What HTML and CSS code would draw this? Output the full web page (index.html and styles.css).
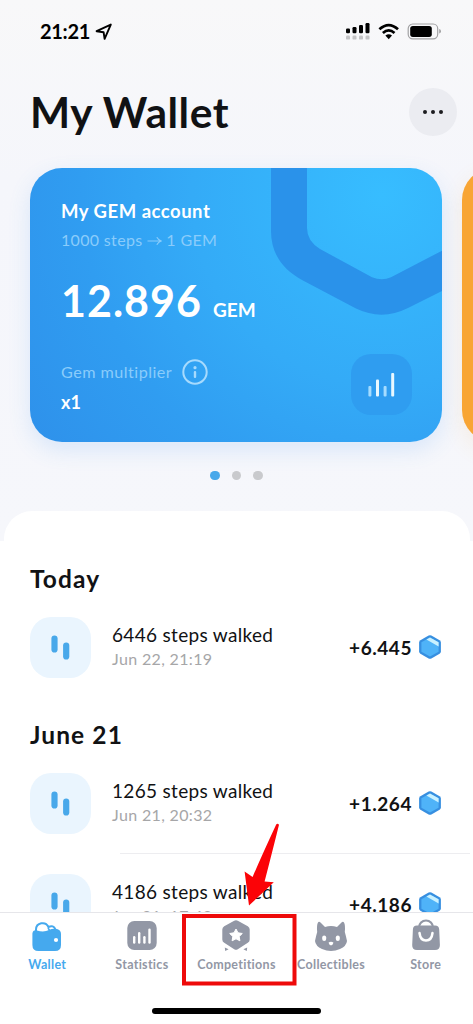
FILE: index.html
```html
<!DOCTYPE html>
<html lang="en">
<head>
<meta charset="utf-8">
<title>My Wallet</title>
<link rel="stylesheet" href="styles.css">
</head>
<body>
<svg width="0" height="0" class="defs">
  <symbol id="gem" viewBox="0 0 24 26">
    <path d="M10.6 1.6 Q12 .9 13.4 1.6 L21.6 6.2 Q22.9 7 22.9 8.5 V17.5 Q22.9 19 21.6 19.8 L13.4 24.4 Q12 25.1 10.6 24.4 L2.4 19.8 Q1.1 19 1.1 17.5 V8.5 Q1.1 7 2.4 6.2 Z" fill="#378fe0"/>
    <path d="M12 3.4 L20.6 8.3 V17.7 L12 22.6 L3.4 17.7 V8.3 Z" fill="#4fb3f8"/>
    <path d="M12 3.4 L20.6 8.3 V12.4 L8.4 5.5 Z" fill="#c9f1ff"/>
  </symbol>
  <symbol id="steps" viewBox="0 0 61 61">
    <rect x="21.4" y="18.5" width="6.2" height="17" rx="3.1" fill="#48a8ea"/>
    <rect x="33.1" y="25.5" width="6.2" height="17" rx="3.1" fill="#48a8ea"/>
  </symbol>
</svg>
<div class="screen">
  <div class="status">
    <div class="clock">21:21</div>
    <svg class="nav-arrow" width="18" height="18" viewBox="0 0 18 18"><path d="M1.6 8.2 L15.8 1.6 L9.6 15.8 L8.6 9.2 Z" fill="none" stroke="#000" stroke-width="1.9" stroke-linejoin="round"/></svg>
    <svg class="indicators" width="100" height="20" viewBox="0 0 100 20">
      <g fill="#000"><rect x="1" y="6.4" width="4" height="4.8" rx="1.2"/><rect x="7.5" y="5" width="4" height="6.2" rx="1.2"/><rect x="14" y="3" width="4" height="8.2" rx="1.2"/><rect x="20.5" y="1" width="4" height="10.2" rx="1.2"/></g>
      <g fill="#c4c4c6"><rect x="1" y="13.6" width="4" height="4" rx="1.2"/><rect x="7.5" y="13.6" width="4" height="4" rx="1.2"/><rect x="14" y="13.6" width="4" height="4" rx="1.2"/><rect x="20.5" y="13.6" width="4" height="4" rx="1.2"/></g>
      <g fill="none" stroke="#000" stroke-width="2.7"><path d="M34.4 7.3 Q43.7 -1.2 53 7.3"/><path d="M37.9 11 Q43.7 5.8 49.5 11"/></g>
      <path d="M40.4 13.6 Q43.7 11 47 13.6 L43.7 17.2 Z" fill="#000"/>
      <rect x="63.2" y="2" width="29.5" height="14.8" rx="4.6" fill="none" stroke="#a2a2a4" stroke-width="1.2"/>
      <rect x="65.2" y="3.9" width="21.6" height="11" rx="2.6" fill="#000"/>
      <path d="M94.2 7 Q96 7.6 96 9.3 Q96 11 94.2 11.6 Z" fill="#a2a2a4"/>
    </svg>
  </div>
  <header class="header">
    <h1>My Wallet</h1>
    <div class="more"><i></i><i></i><i></i></div>
  </header>
  <div class="carousel">
    <section class="card">
      <svg class="card-art" width="412" height="274" viewBox="30 168 412 274">
        <path d="M271 168 V231 C271 255 284 270 302 280 L356 308.500 Q382 321 408 308 L442 291 V250.700 L391 277.200 Q382 281.500 372 277.200 L320 249 Q307 241 307 228 V168 Z" fill="#2a92ea"/>
      </svg>
      <div class="card-body">
        <div class="card-title">My GEM account</div>
        <div class="card-rate">1000 steps <svg width="15" height="10" viewBox="0 0 15 10"><path d="M.5 5 H14 M9.800 1.200 Q11.500 4 14.200 5 Q11.500 6 9.800 8.800" fill="none" stroke="currentColor" stroke-width="1.2"/></svg> 1 GEM</div>
        <div class="balance"><span class="amount-big">12.896</span><span class="unit">GEM</span></div>
        <div class="multi"><span>Gem multiplier</span>
          <svg width="26" height="26" viewBox="0 0 26 26"><circle cx="13" cy="13" r="11.700" fill="none" stroke="currentColor" stroke-width="2"/><circle cx="13" cy="8.700" r="1.600" fill="currentColor"/><rect x="11.800" y="12" width="2.400" height="7" rx="1" fill="currentColor"/></svg>
        </div>
        <div class="factor">x1</div>
      </div>
      <div class="chart-btn">
        <svg width="61" height="61" viewBox="0 0 61 61"><g fill="#e9f8ff"><rect x="25" y="25.500" width="3" height="17" rx="1"/><rect x="40.200" y="19" width="3" height="23.500" rx="1"/></g><g fill="#a5dcff"><rect x="17.400" y="32" width="3" height="10.500" rx="1"/><rect x="32.600" y="32" width="3" height="10.500" rx="1"/></g></svg>
      </div>
    </section>
    <section class="card card-next"></section>
  </div>
  <div class="dots"><i class="on"></i><i></i><i></i></div>
  <main class="sheet">
    <h2>Today</h2>
    <div class="row">
      <svg class="row-icon" width="61" height="61"><use href="#steps"/></svg>
      <div class="info"><div class="what">6446 steps walked</div><div class="when">Jun 22, 21:19</div></div>
      <div class="sum">+6.445</div><svg class="gem" width="26" height="26"><use href="#gem"/></svg>
    </div>
    <h2 class="second">June 21</h2>
    <div class="row">
      <svg class="row-icon" width="61" height="61"><use href="#steps"/></svg>
      <div class="info"><div class="what">1265 steps walked</div><div class="when">Jun 21, 20:32</div></div>
      <div class="sum">+1.264</div><svg class="gem" width="26" height="26"><use href="#gem"/></svg>
    </div>
    <hr>
    <div class="row">
      <svg class="row-icon" width="61" height="61"><use href="#steps"/></svg>
      <div class="info"><div class="what">4186 steps walked</div><div class="when">Jun 21, 17:42</div></div>
      <div class="sum">+4.186</div><svg class="gem" width="26" height="26"><use href="#gem"/></svg>
    </div>
  </main>
  <nav class="tabs">
    <div class="tab active">
      <svg width="36" height="34" viewBox="0 0 36 34"><path d="M7 13 V10.500 A6.500 6.500 0 0 1 19.400 8 Q24.500 5.500 26.500 10.500" fill="none" stroke="#45a9ee" stroke-width="2"/><path d="M19 9 L21 12" stroke="#45a9ee" stroke-width="1.500"/><path d="M3.400 14.500 Q4 10.500 8 11.500 Q15 13.500 20 11 Q24 9 28 10 Q32 11 32 15 V26 Q32 32 26 32 H9.500 Q3.400 32 3.400 26 Z" fill="#45a9ee"/><circle cx="27" cy="21" r="2.100" fill="#fff"/></svg>
      <span>Wallet</span>
    </div>
    <div class="tab">
      <svg width="36" height="34" viewBox="0 0 36 34"><rect x="3.300" y="2" width="29.400" height="29" rx="7" fill="#9297a5"/><g fill="#fff"><rect x="9" y="17" width="2.400" height="7.700" rx="1.200"/><rect x="14" y="13" width="2.400" height="11.700" rx="1.200"/><rect x="19.200" y="17" width="2.400" height="7.700" rx="1.200"/><rect x="24.300" y="9.500" width="2.400" height="15.200" rx="1.200"/></g></svg>
      <span>Statistics</span>
    </div>
    <div class="tab">
      <svg width="36" height="34" viewBox="0 0 36 34"><path d="M16.200 1.800 Q18 .9 19.800 1.800 L29.800 7.300 Q31.700 8.500 31.700 10.500 V20.500 Q31.700 22.700 29.800 23.800 L19.800 30.200 Q18 31.200 16.200 30.200 L6.200 23.800 Q4.300 22.700 4.300 20.500 V10.500 Q4.300 8.500 6.200 7.300 Z" fill="#9297a5"/><path d="M18 10 L20 13.800 L24.300 14.500 L21.200 17.500 L21.900 21.800 L18 19.800 L14.100 21.800 L14.800 17.500 L11.700 14.500 L16 13.800 Z" fill="#fff" stroke="#fff" stroke-width="1" stroke-linejoin="round"/><path d="M6.800 28.500 L10.600 30.300 L7.200 32 Z M29.200 28.500 L25.400 30.300 L28.800 32 Z" fill="#9297a5"/></svg>
      <span>Competitions</span>
    </div>
    <div class="tab">
      <svg width="36" height="34" viewBox="0 0 36 34"><path d="M4.200 13 Q3.500 6 5 3.500 Q6 2 8 4 L12 8 Q18 5.800 24 8 L28 4 Q30 2 31 3.500 Q32.500 6 31.800 13 Q33 17 34 22 Q33.500 27 27 30 Q18 34 9 30 Q2.500 27 2 22 Q3 17 4.200 13 Z" fill="#9297a5"/><rect x="9.200" y="16.500" width="4" height="5.500" rx="2" fill="#fff"/><rect x="22.800" y="16.500" width="4" height="5.500" rx="2" fill="#fff"/><path d="M15.600 23.500 Q18 22 20.400 23.500 Q20.200 25.800 18 26.500 Q15.800 25.800 15.600 23.500 Z" fill="#fff"/></svg>
      <span>Collectibles</span>
    </div>
    <div class="tab">
      <svg width="36" height="34" viewBox="0 0 36 34"><path d="M11 8.500 A7 7 0 0 1 25 8.500" fill="none" stroke="#9297a5" stroke-width="2.200"/><path d="M9 6.500 H27 Q31 6.500 31.200 10.500 L31.900 26 Q32 31 27 31 H9 Q4 31 4.200 26 L4.900 10.500 Q5 6.500 9 6.500 Z" fill="#9297a5"/><path d="M11.500 14 Q12.300 21.500 18 21.500 Q23.700 21.500 24.500 14" fill="none" stroke="#fff" stroke-width="2.500" stroke-linecap="round"/></svg>
      <span>Store</span>
    </div>
  </nav>
  <div class="home"></div>
  <svg class="callout" width="120" height="166" viewBox="180 822 120 166"><rect x="184" y="916" width="110.500" height="67.500" fill="none" stroke="#ee0a0a" stroke-width="4"/><path d="M276.200 824.500 Q277.500 823 279 824.800 Q273 849 264.600 881.500 L273.800 882.300 L249 905.500 L244.600 871.500 L252.600 877 Q262 855 276.200 824.500 Z" fill="#fb0307"/></svg>
</div>
</body>
</html>
```
FILE: styles.css
```css
* { box-sizing: border-box; }
body { margin: 0; font-family: Lato, "Open Sans", sans-serif; color: #111214; }
.defs { display: block; position: absolute; }
.screen { position: relative; width: 473px; height: 1024px; overflow: hidden; display: flex; flex-direction: column; background: linear-gradient(#f8f8f9 0, #f5f6fb 180px, #f6f7fb 541px, #fff 541px); }
.status { height: 64px; flex: none; display: flex; align-items: flex-start; padding: 22px 28px 0 40px; }
.clock { font-size: 20px; line-height: 18px; font-weight: 700; color: #000; letter-spacing: -.3px; }
.nav-arrow { margin: 1px 0 0 5px; }
.indicators { margin-left: auto; }
.header { height: 104px; flex: none; display: flex; justify-content: space-between; padding: 24px 16px 0 30px; }
h1 { margin: 0; font-size: 42.500px; line-height: 47px; font-weight: 700; letter-spacing: .55px; }
.more { width: 48px; height: 48px; border-radius: 50%; background: #ebecf1; display: flex; align-items: center; justify-content: center; gap: 4.200px; }
.more i { width: 4.200px; height: 4.200px; border-radius: 50%; background: #1c1c1f; }
.carousel { flex: none; display: flex; gap: 20px; padding-left: 30px; height: 274px; }
.card { position: relative; flex: none; width: 412px; height: 274px; border-radius: 32px; color: #fff; background: radial-gradient(circle at 352px 27px, #37bdff 0, #34abf7 190px, #309df1 300px, #2e90ea 440px); box-shadow: 0 8px 22px rgba(70, 150, 240, .16); }
.card-next { background: #f8a534; box-shadow: 0 8px 22px rgba(248, 165, 52, .12); }
.card-art { position: absolute; left: 0; top: 0; border-radius: 32px; }
.card-body { position: relative; padding: 31px 0 0 31px; }
.card-title { font-size: 18.500px; line-height: 24px; font-weight: 700; letter-spacing: .5px; }
.card-rate { margin-top: 5px; font-size: 16px; line-height: 24px; color: #8accfb; letter-spacing: .33px; }
.balance { margin-top: 22px; height: 54px; line-height: 54px; display: flex; align-items: baseline; }
.amount-big { font-size: 43px; font-weight: 700; letter-spacing: 1px; }
.unit { font-size: 19px; font-weight: 700; margin-left: 11px; }
.multi { margin-top: 31px; height: 26px; display: flex; align-items: center; gap: 10px; font-size: 16.200px; color: #8accfb; letter-spacing: .45px; }
.multi span { margin-top: -2px; }
.multi svg { color: #a6dafd; }
.factor { margin-top: 5px; font-size: 18px; line-height: 24px; font-weight: 700; }
.chart-btn { position: absolute; right: 30px; bottom: 27px; width: 61px; height: 61px; border-radius: 20px; background: #2f9df0; }
.dots { flex: none; height: 69px; display: flex; justify-content: center; gap: 12px; padding-top: 29px; }
.dots i { width: 9.400px; height: 9.400px; border-radius: 50%; background: #c9cacd; }
.dots .on { background: #48a8ea; }
.sheet { flex: 1; min-height: 0; overflow: hidden; margin: 0 3px 0 4px; background: #fff; border-radius: 28px 28px 0 0; padding: 53px 28px 0 26px; }
h2 { margin: 0 0 23px; font-size: 24.500px; line-height: 30px; font-weight: 700; letter-spacing: 1.1px; }
h2.second { margin-top: 42px; }
.row { height: 61px; display: flex; align-items: center; }
.row-icon { flex: none; background: #eaf5fe; border-radius: 21px; }
.info { margin-left: 21px; flex: 1; white-space: nowrap; padding-bottom: 1px; }
.what { font-size: 19px; line-height: 24px; letter-spacing: .32px; }
.when { font-size: 16px; line-height: 24px; color: #a6a6a8; letter-spacing: .35px; }
.sum { font-size: 19px; font-weight: 700; white-space: nowrap; letter-spacing: .55px; padding-bottom: 1px; }
.gem { margin: 0 -1px 1px 5px; flex: none; }
hr { border: 0; height: 1px; background: #ededf0; margin: 19px -31px 20px 90px; }
.tabs { flex: none; height: 96px; background: #fff; border-top: 1px solid #e6e6ea; display: flex; padding-top: 6px; }
.tab { flex: 1 1 0; min-width: 0; display: flex; flex-direction: column; align-items: center; color: #9297a5; font-size: 12.500px; font-weight: 700; line-height: 18px; gap: 3px; letter-spacing: .3px; }
.tab.active { color: #45a9ee; }
.home { flex: none; align-self: center; width: 169px; height: 6px; border-radius: 3px; background: #000; margin-bottom: 10px; }
.callout { position: absolute; left: 180px; top: 822px; }
```
